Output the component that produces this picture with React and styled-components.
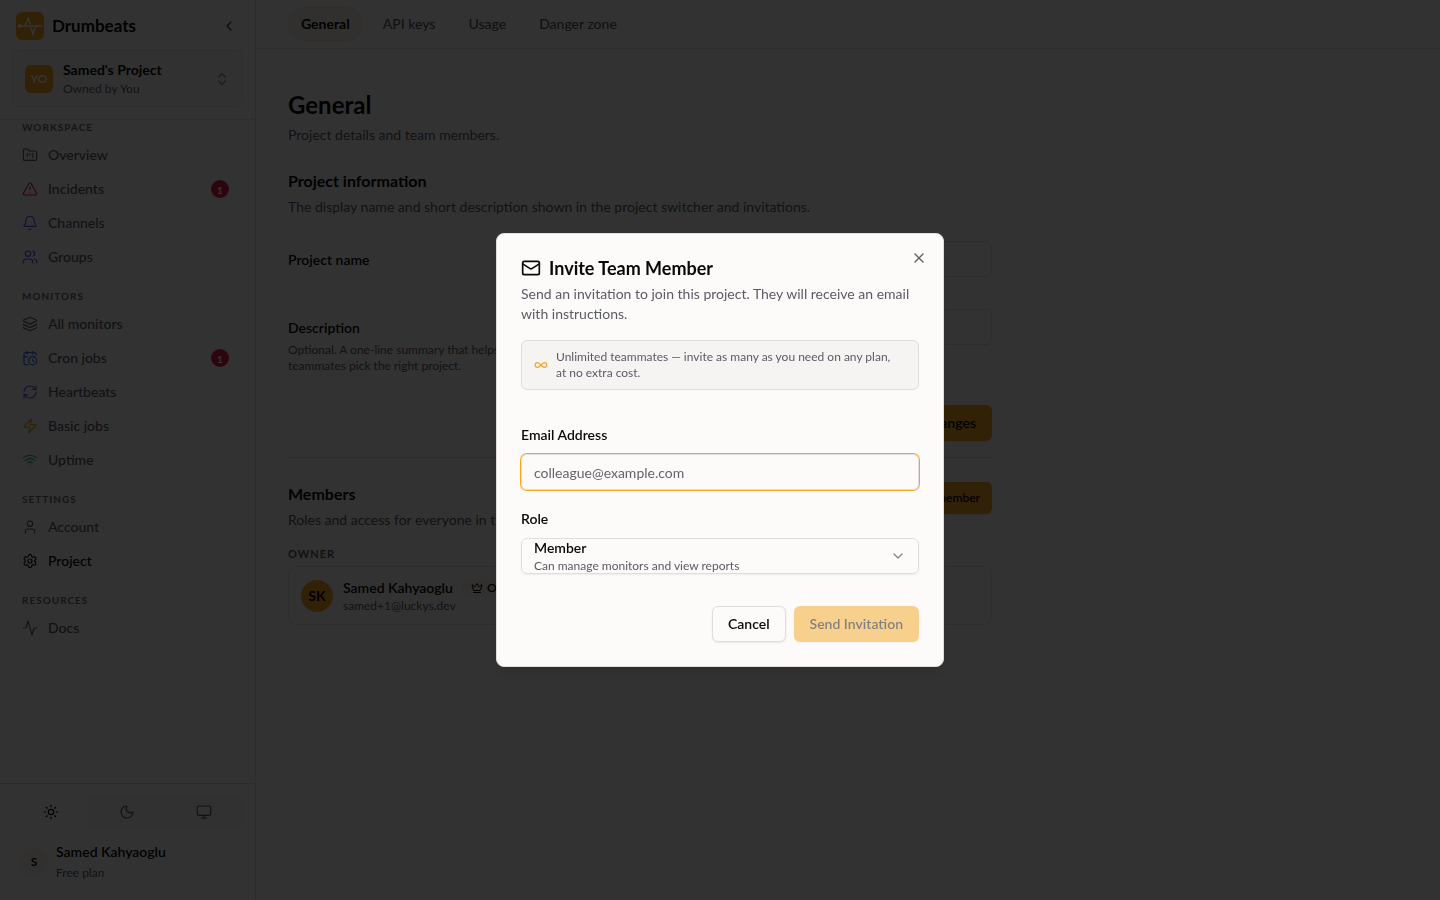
import React, { useState } from 'react'
import styled, { createGlobalStyle } from 'styled-components';
import {
  Activity, CalendarClock, ChevronDown, ChevronLeft, ChevronsUpDown, Crown,
  FolderKanban, Infinity as InfinityIcon, Layers, Mail, Monitor, Moon, RefreshCw,
  Bell, Settings, Sun, TriangleAlert, User, Users, Wifi, X, Zap,
} from 'lucide-react';

const GlobalStyle = createGlobalStyle`
  * { box-sizing: border-box; }
  body {
    margin: 0;
    background-color: #fafafa;
    color: #09090b;
    font-family: Lato, "Liberation Sans", sans-serif;
    font-size: 14px;
    line-height: 20px;
  }
  h1, h2, p { margin: 0; }
  button, input, select { font: inherit; color: inherit; }
  button { cursor: pointer; }
  svg { flex-shrink: 0; }
`;

const Page = styled.div`
  display: flex;
  height: 100vh;
  overflow: hidden;
`;

const Sidebar = styled.aside`
  display: flex;
  flex-direction: column;
  width: 256px;
  flex-shrink: 0;
  border-right: 1px solid #dcdcd6;
`;
const SidebarTop = styled.div`
  padding: 8px 12px 12px;
  border-bottom: 1px solid #e4e4de;
`;
const Brand = styled.div`
  display: flex;
  align-items: center;
  gap: 8px;
  height: 36px;
  padding: 0 4px;
  margin-bottom: 6px;
  font-size: 17px;
  font-weight: 700;
`;
const Collapse = styled.button`
  display: flex;
  margin-left: auto;
  padding: 2px;
  border: 0;
  background: none;
  color: #3f3f46;
`;
const Switcher = styled.button`
  display: flex;
  align-items: center;
  gap: 10px;
  width: 100%;
  height: 57px;
  padding: 0 12px;
  border: 1px solid #e2e2dc;
  border-radius: 8px;
  background-color: #f6f6f5;
  text-align: left;
`;
const Initials = styled.span`
  display: grid;
  place-items: center;
  width: 28px;
  height: 28px;
  border-radius: 6px;
  background-color: #f5a623;
  color: #ffffff;
  font-size: 12px;
  font-weight: 700;
`;
const Stack = styled.div`
  display: flex;
  flex-direction: column;
  flex: 1;
  min-width: 0;
`;
const Strong = styled.span`
  font-weight: ${({ $bold }) => ($bold ? 700 : 600)};
`;
const Small = styled.span`
  color: #5b5b66;
  font-size: 12px;
  line-height: ${({ $tight }) => ($tight ? '16px' : '18px')};
`;

const Nav = styled.nav`
  flex: 1;
  overflow: hidden;
  padding: 0 12px;
`;
const Group = styled.div`
  margin-bottom: 14px;
`;
const GroupTitle = styled.div`
  height: 19px;
  padding: 0 10px;
  color: #6b6b75;
  font-size: 10px;
  font-weight: 700;
  line-height: 15px;
  letter-spacing: 1px;
  text-transform: uppercase;
`;
const GroupItems = styled.div`
  display: flex;
  flex-direction: column;
`;
const NavItem = styled.a`
  display: flex;
  align-items: center;
  gap: 10px;
  height: 34px;
  padding: 0 14px 2px 10px;
  color: ${({ $active }) => ($active ? '#09090b' : '#5b5b66')};
  font-weight: 500;
  text-decoration: none;
  svg { color: ${({ $tint }) => $tint || 'inherit'}; }
`;
const Count = styled.span`
  display: grid;
  place-items: center;
  width: 18px;
  height: 18px;
  margin-left: auto;
  border-radius: 9px;
  background-color: #e11d48;
  color: #ffffff;
  font-size: 10px;
  font-weight: 700;
`;

const SidebarFoot = styled.div`
  padding: 12px 12px 18px;
  border-top: 1px solid #d8d8d2;
`;
const ThemeSwitch = styled.div`
  display: grid;
  grid-template-columns: repeat(3, 1fr);
  height: 32px;
  padding: 1px;
  border-radius: 8px;
  background-color: #f5f5f4;
`;
const ThemeButton = styled.button`
  display: grid;
  place-items: center;
  border: 0;
  border-radius: 7px;
  background-color: ${({ $active }) => ($active ? '#fbfbfa' : 'transparent')};
  color: ${({ $active }) => ($active ? '#09090b' : '#5b5b66')};
`;
const Profile = styled.div`
  display: flex;
  align-items: center;
  gap: 8px;
  margin-top: 14px;
  padding: 0 8px;
  ${Stack} { gap: 2px; }
`;
const Avatar = styled.span`
  display: grid;
  place-items: center;
  width: ${({ $size }) => $size}px;
  height: ${({ $size }) => $size}px;
  border-radius: 50%;
  background-color: ${({ $bg }) => $bg};
  font-size: ${({ $size }) => ($size > 28 ? 14 : 12)}px;
  font-weight: 700;
`;

const Main = styled.main`
  flex: 1;
  min-width: 0;
`;
const Tabs = styled.nav`
  display: flex;
  align-items: center;
  gap: 7px;
  height: 49px;
  padding: 0 32px;
  border-bottom: 1px solid #dcdcd6;
`;
const Tab = styled.a`
  padding: 6px 12px;
  border: 1px solid ${({ $active }) => ($active ? '#f0e8dc' : 'transparent')};
  border-radius: 17px;
  background-color: ${({ $active }) => ($active ? '#f4efe8' : 'transparent')};
  color: ${({ $active }) => ($active ? '#09090b' : '#5b5b66')};
  font-weight: ${({ $active }) => ($active ? 700 : 500)};
  text-decoration: none;
`;
const Content = styled.div`
  max-width: 768px;
  padding: 40px 32px;
`;
const Heading = styled.h1`
  font-size: 24px;
  line-height: 32px;
  font-weight: 700;
`;
const SubHeading = styled.h2`
  font-size: 16px;
  line-height: 24px;
  font-weight: 700;
`;
const Muted = styled.p`
  margin-top: ${({ $gap }) => $gap || 0}px;
  color: #5b5b66;
`;
const Section = styled.section`
  padding-top: 24px;
`;
const FormRow = styled.div`
  display: grid;
  grid-template-columns: 240px 1fr;
  gap: 24px;
  margin-top: ${({ $gap }) => $gap}px;
`;
const RowLabel = styled.label`
  display: flex;
  flex-direction: column;
  gap: 4px;
  padding-top: 9px;
  font-weight: 600;
  ${Small} { font-weight: 400; }
`;
const Input = styled.input`
  width: 100%;
  height: 36px;
  padding: 0 12px;
  border: 1px solid #dededa;
  border-radius: 6px;
  background-color: transparent;
`;
const Button = styled.button`
  height: ${({ $small }) => ($small ? 32 : 36)}px;
  padding: 0 ${({ $small }) => ($small ? 11 : 15)}px;
  border: 1px solid ${({ $outline }) => ($outline ? '#dededa' : 'transparent')};
  border-radius: 6px;
  background: ${({ $outline }) => ($outline ? '#fcfbf9' : '#f5a623')} padding-box border-box;
  font-size: ${({ $small }) => ($small ? 12 : 14)}px;
  font-weight: 600;
  box-shadow: 0 1px 2px rgba(0, 0, 0, 0.08);
  &:disabled { opacity: 0.5; }
`;
const Actions = styled.div`
  display: flex;
  justify-content: flex-end;
  gap: 8px;
  margin-top: ${({ $gap }) => $gap}px;
`;
const Divider = styled.hr`
  margin: 16px 0 0;
  border: 0;
  border-top: 1px solid #dcdcd6;
`;
const SectionHead = styled.div`
  display: flex;
  align-items: flex-start;
  justify-content: space-between;
`;
const OwnerTitle = styled.div`
  margin: 16px 0 4px;
  color: #5b5b66;
  font-size: 11px;
  line-height: 16px;
  font-weight: 700;
  letter-spacing: 1px;
`;
const MemberCard = styled.div`
  display: flex;
  align-items: center;
  gap: 10px;
  height: 59px;
  padding: 0 12px;
  border: 1px solid #e6e6e0;
  border-radius: 8px;
`;
const MemberName = styled.div`
  display: flex;
  align-items: center;
  gap: 8px;
  font-weight: 600;
`;
const RoleBadge = styled.span`
  display: inline-flex;
  align-items: center;
  gap: 4px;
  padding: 0 10px;
  border-radius: 9px;
  background-color: #f4efe8;
  font-size: 12px;
  line-height: 18px;
`;

const Overlay = styled.div`
  position: fixed;
  inset: 0;
  display: grid;
  place-items: center;
  background-color: rgba(0, 0, 0, 0.8);
`;
const Dialog = styled.div`
  position: relative;
  width: 448px;
  max-width: 100%;
  padding: 24px;
  border: 1px solid #dededa;
  border-radius: 8px;
  background-color: #fcfbf9;
  box-shadow: 0 10px 15px -3px rgba(0, 0, 0, 0.1), 0 4px 6px -4px rgba(0, 0, 0, 0.1);
`;
const Close = styled.button`
  position: absolute;
  top: 16px;
  right: 16px;
  display: flex;
  padding: 0;
  border: 0;
  background: none;
  color: #5f5f63;
`;
const DialogTitle = styled.h2`
  display: flex;
  align-items: center;
  gap: 8px;
  height: 20px;
  font-size: 18px;
  font-weight: 700;
`;
const Notice = styled.div`
  display: flex;
  align-items: center;
  gap: 8px;
  margin-top: 16px;
  padding: 8px 20px 8px 12px;
  border: 1px solid #dededa;
  border-radius: 6px;
  background-color: #f5f4f2;
  color: #5b5b66;
  font-size: 12px;
  line-height: 16px;
  svg { color: #f5a623; }
`;
const Field = styled.div`
  display: flex;
  flex-direction: column;
  gap: 9px;
  margin-top: ${({ $gap }) => $gap}px;
  > label { font-weight: 600; }
`;
const EmailInput = styled(Input)`
  box-shadow: 0 0 0 1px #f5a623;
  outline: 0;
  &::placeholder { color: #64646e; opacity: 1; }
`;
const RoleBox = styled.div`
  position: relative;
  display: flex;
  align-items: center;
  height: 36px;
  padding: 0 12px;
  border: 1px solid #dededa;
  border-radius: 6px;
  box-shadow: 0 1px 2px rgba(0, 0, 0, 0.06);
  > svg { color: #85858a; }
`;
// the native select sits invisibly over the two-line value
const RoleSelect = styled.select`
  position: absolute;
  inset: 0;
  width: 100%;
  opacity: 0;
  cursor: pointer;
`;

const Logo = () => (
  <svg width="28" height="28" viewBox="0 0 28 28" fill="none" aria-hidden="true">
    <rect width="28" height="28" rx="6" fill="#f5a623" />
    <circle cx="3.5" cy="14" r="2" fill="#fff" />
    <path
      d="M3 14h23M9 12.500l1.500-1.500L12.300 5.500l1.900 6.500M14.800 16l2.200 6.500 1.500-5.500 1.300-1.200"
      stroke="#fff"
      strokeWidth="1.5"
      strokeLinejoin="round"
      strokeLinecap="round"
    />
  </svg>
);

const groups = [
  {
    title: 'Workspace',
    items: [
      { label: 'Overview', icon: FolderKanban },
      { label: 'Incidents', icon: TriangleAlert, tint: '#e11d48', count: 1 },
      { label: 'Channels', icon: Bell, tint: '#6353f5' },
      { label: 'Groups', icon: Users, tint: '#6353f5' },
    ],
  },
  {
    title: 'Monitors',
    items: [
      { label: 'All monitors', icon: Layers },
      { label: 'Cron jobs', icon: CalendarClock, tint: '#2f74ee', count: 1 },
      { label: 'Heartbeats', icon: RefreshCw, tint: '#7c4df0' },
      { label: 'Basic jobs', icon: Zap, tint: '#f59e0b' },
      { label: 'Uptime', icon: Wifi, tint: '#10b981' },
    ],
  },
  {
    title: 'Settings',
    items: [
      { label: 'Account', icon: User },
      { label: 'Project', icon: Settings, active: true },
    ],
  },
  { title: 'Resources', items: [{ label: 'Docs', icon: Activity }] },
];

const tabs = ['General', 'API keys', 'Usage', 'Danger zone'];

const roles = {
  Member: 'Can manage monitors and view reports',
};

const Menu = () => (
  <Sidebar>
    <SidebarTop>
      <Brand>
        <Logo />
        Drumbeats
        <Collapse aria-label="Collapse sidebar"><ChevronLeft size={16} /></Collapse>
      </Brand>
      <Switcher>
        <Initials>YO</Initials>
        <Stack>
          <Strong $bold>Samed's Project</Strong>
          <Small>Owned by You</Small>
        </Stack>
        <ChevronsUpDown size={16} color="#8a8a90" />
      </Switcher>
    </SidebarTop>
    <Nav>
      {groups.map((group) => (
        <Group key={group.title}>
          <GroupTitle>{group.title}</GroupTitle>
          <GroupItems>
            {group.items.map(({ label, icon: Icon, tint, count, active }) => (
              <NavItem key={label} href="#" $tint={tint} $active={active}>
                <Icon size={16} strokeWidth={1.75} />
                {label}
                {count && <Count>{count}</Count>}
              </NavItem>
            ))}
          </GroupItems>
        </Group>
      ))}
    </Nav>
    <SidebarFoot>
      <ThemeSwitch>
        <ThemeButton $active aria-label="Light"><Sun size={16} strokeWidth={1.75} /></ThemeButton>
        <ThemeButton aria-label="Dark"><Moon size={16} strokeWidth={1.75} /></ThemeButton>
        <ThemeButton aria-label="System"><Monitor size={16} strokeWidth={1.75} /></ThemeButton>
      </ThemeSwitch>
      <Profile>
        <Avatar $size={28} $bg="#f4f1ea">S</Avatar>
        <Stack>
          <Strong>Samed Kahyaoglu</Strong>
          <Small>Free plan</Small>
        </Stack>
      </Profile>
    </SidebarFoot>
  </Sidebar>
);

const ProjectSettings = () => (
  <Main>
    <Tabs>
      {tabs.map((tab) => (
        <Tab key={tab} href="#" $active={tab === 'General'}>{tab}</Tab>
      ))}
    </Tabs>
    <Content>
      <Heading>General</Heading>
      <Muted $gap={4}>Project details and team members.</Muted>
      <Section>
        <SubHeading>Project information</SubHeading>
        <Muted $gap={4}>The display name and short description shown in the project switcher and invitations.</Muted>
        <FormRow $gap={24}>
          <RowLabel htmlFor="project-name">Project name</RowLabel>
          <Input id="project-name" />
        </FormRow>
        <FormRow $gap={32}>
          <RowLabel htmlFor="description">
            Description
            <Small $tight>Optional. A one-line summary that helps teammates pick the right project.</Small>
          </RowLabel>
          <Input id="description" />
        </FormRow>
        <Actions $gap={31}><Button>Save changes</Button></Actions>
      </Section>
      <Divider />
      <Section>
        <SectionHead>
          <div>
            <SubHeading>Members</SubHeading>
            <Muted $gap={4}>Roles and access for everyone in this project.</Muted>
          </div>
          <Button $small>Invite member</Button>
        </SectionHead>
        <OwnerTitle>OWNER</OwnerTitle>
        <MemberCard>
          <Avatar $size={32} $bg="#f5a623">SK</Avatar>
          <Stack>
            <MemberName>
              Samed Kahyaoglu
              <RoleBadge><Crown size={12} />Owner</RoleBadge>
            </MemberName>
            <Small $tight>samed+1@luckys.dev</Small>
          </Stack>
        </MemberCard>
      </Section>
    </Content>
  </Main>
);

const InviteDialog = () => {
  const [email, setEmail] = useState('');
  const [role, setRole] = useState('Member');

  return (
    <Overlay>
      <Dialog role="dialog" aria-modal="true" aria-labelledby="invite-title">
        <Close aria-label="Close"><X size={16} /></Close>
        <DialogTitle id="invite-title"><Mail size={20} />Invite Team Member</DialogTitle>
        <Muted $gap={6}>Send an invitation to join this project. They will receive an email with instructions.</Muted>
        <Notice>
          <InfinityIcon size={14} />
          <span>Unlimited teammates — invite as many as you need on any plan, at no extra cost.</span>
        </Notice>
        <Field $gap={35}>
          <label htmlFor="email">Email Address</label>
          <EmailInput
            id="email"
            type="email"
            placeholder="colleague@example.com"
            value={email}
            onChange={(e) => setEmail(e.target.value)}
          />
        </Field>
        <Field $gap={19}>
          <label htmlFor="role">Role</label>
          <RoleBox>
            <Stack>
              <Strong>{role}</Strong>
              <Small $tight>{roles[role]}</Small>
            </Stack>
            <ChevronDown size={16} />
            <RoleSelect id="role" value={role} onChange={(e) => setRole(e.target.value)}>
              {Object.keys(roles).map((name) => <option key={name}>{name}</option>)}
            </RoleSelect>
          </RoleBox>
        </Field>
        <Actions $gap={32}>
          <Button $outline>Cancel</Button>
          <Button disabled={!email}>Send Invitation</Button>
        </Actions>
      </Dialog>
    </Overlay>
  );
}

const App = () => (
  <>
    <GlobalStyle />
    <Page>
      <Menu />
      <ProjectSettings />
    </Page>
    <InviteDialog />
  </>
)

export default App;
